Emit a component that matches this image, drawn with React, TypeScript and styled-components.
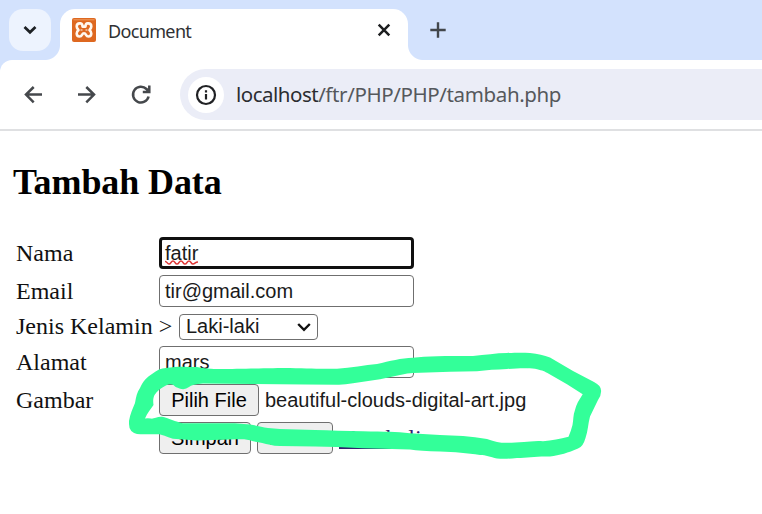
import React from 'react';
import styled, { createGlobalStyle, css } from 'styled-components';

const GlobalStyle = createGlobalStyle`
  * { box-sizing: border-box; }
  body { margin: 0; background: #fff; overflow: hidden; }
`;

const Screen = styled.div`
  position: relative;
  width: 762px;
  height: 514px;
  overflow: hidden;
  background: #fff;
`;

const TabStrip = styled.header`
  display: flex;
  align-items: flex-start;
  height: 60px;
  padding: 9px 0 0 9px;
  background: #d3e2fd;
`;

const TabSearch = styled.button`
  display: grid;
  place-items: center;
  width: 42px;
  height: 42px;
  padding: 0;
  border: 0;
  border-radius: 14px;
  background: #edf3fe;
`;

const Tab = styled.div`
  position: relative;
  display: flex;
  align-items: center;
  width: 348px;
  height: 51px;
  margin-left: 9px;
  padding: 0 15px 9px 12px;
  border-radius: 15px 15px 0 0;
  background: #fff;
  &::before, &::after {
    content: '';
    position: absolute;
    bottom: 0;
    width: 15px;
    height: 15px;
  }
  &::before { left: -15px; background: radial-gradient(circle at 0 0, transparent 14.5px, #fff 15.5px); }
  &::after { right: -15px; background: radial-gradient(circle at 100% 0, transparent 14.5px, #fff 15.5px); }
`;

const TabTitle = styled.span`
  flex: 1;
  margin: 2px 0 0 12px;
  font: 18px/24px "Noto Sans", sans-serif;
  letter-spacing: -0.65px;
  color: #303134;
`;

const TabIcon = styled.svg`
  display: block;
  overflow: visible;
`;

const NewTab = styled.button`
  display: grid;
  place-items: center;
  width: 30px;
  height: 42px;
  margin-left: 15px;
  padding: 0;
  border: 0;
  background: none;
`;

const ToolbarBack = styled.div`
  background: #d3e2fd;
`;

const Toolbar = styled.nav`
  display: flex;
  align-items: center;
  height: 71px;
  padding-left: 18px;
  border-bottom: 2px solid #dfe0e2;
  border-radius: 12px 0 0 0;
  background: #fff;
`;

const NavButton = styled.button`
  display: grid;
  place-items: center;
  width: 30px;
  height: 30px;
  margin-right: 24px;
  padding: 0;
  border: 0;
  background: none;
`;

const AddressBar = styled.div`
  display: flex;
  flex: 1;
  align-items: center;
  height: 51px;
  padding-left: 8px;
  border-radius: 26px 0 0 26px;
  background: #ebedf7;
`;

const SiteInfo = styled.span`
  display: grid;
  place-items: center;
  width: 36px;
  height: 36px;
  border-radius: 50%;
  background: #fff;
`;

const Url = styled.span`
  margin: -2px 0 0 12px;
  font: 20.5px/28px "Noto Sans", sans-serif;
  letter-spacing: -0.38px;
  color: #55585c;
  white-space: nowrap;
  b { font-weight: 400; letter-spacing: -0.5px; color: #2b2d31; }
`;

const Page = styled.main`
  padding: 30px 0 0 13px;
  font: 24px/27px "Liberation Serif", serif;
  color: #111;
`;

const Heading = styled.h2`
  margin: 0 0 32px;
  font-size: 36px;
  line-height: 42px;
  font-weight: 700;
  letter-spacing: -0.1px;
  color: #000;
`;

const FormRow = styled.div<{ $height: number }>`
  display: flex;
  align-items: center;
  height: ${p => p.$height}px;
  padding-left: 3px;
`;

const Label = styled.label<{ $drop?: number }>`
  width: 143px;
  padding-top: ${p => (p.$drop ?? 0) * 2}px;
  white-space: pre;
`;

const controlText = css`
  font: 20px/23px "Liberation Sans", sans-serif;
  color: #1a1a1a;
`;

const Field = styled.div<{ $focused?: boolean; $drop?: number }>`
  ${controlText}
  display: flex;
  align-items: center;
  width: 255px;
  height: 32px;
  padding: ${p => (p.$drop ?? 0) * 2}px ${p => (p.$focused ? 3 : 5)}px 0;
  border: ${p => (p.$focused ? '3px solid #101010' : '1px solid #6f6f6f')};
  border-radius: 4px;
  background: #fff;
`;

const Misspelled = styled.span`
  position: relative;
  svg { position: absolute; left: 0; bottom: 0; }
`;

const Select = styled.div`
  ${controlText}
  display: flex;
  align-items: center;
  justify-content: space-between;
  width: 139px;
  height: 26px;
  margin-left: 20px;
  padding: 0 6px;
  border: 1px solid #6f6f6f;
  border-radius: 4px;
`;

const Button = styled.button<{ $width: number }>`
  ${controlText}
  width: ${p => p.$width}px;
  height: 32px;
  margin-right: 6px;
  padding: 0;
  border: 1px solid #6f6f6f;
  border-radius: 4px;
  background: #efefef;
  color: #000;
`;

const FileName = styled.span`
  ${controlText}
`;

const BackLink = styled.a`
  color: #31206e;
  text-decoration: underline;
  text-decoration-thickness: 2px;
  text-underline-offset: 1px;
`;

const Marker = styled.svg`
  position: absolute;
  inset: 0;
  pointer-events: none;
`;

const markerOutline =
  'M129 421 C130 414 133 408 135 403 C136 397 137 392 140 388 C143 381 147 377 152 374 C157 370 161 368 166 368 C178 366 187 367 197 367 C208 369 215 369 222 369 C236 369 270 368 290 368 C310 368.5 325 369 337 368.7 C351 368 365 365 377 364 C390 361 401 358 413 357.7 C426 356 445 356 473 356 C485 355 496 353 507 353 C517 352.5 524 352.5 530 353 C538 354 544 355 550 357.5 L573 371 L594 382 Q602 386 601 392 Q601 396 598 400 L590 416.5 C588 424 588 431 585.5 438 Q583 447 578 448.5 C568 453 560 455 550 456.5 C536 456 528 458 517 458 C508 459 502 459 497 458.5 C490 457 486 455 480 455 C467 453 455 452 440 451.5 Q420 451 410 449.5 L383 448.7 L363 448.2 L337 447 L315 446.4 L280 446 Q274 446 270 444.8 C264 443.5 260 442 253 441.3 C247 439 243 439 237 439.3 L197 440.5 L173 438.7 C166 437 162 434 157 434.3 C149 434 143 434.5 137 434 Q129 432 129 424 Z ' +
  'M145 418.5 C147 413 151 409 153.5 405 C153 401 153 398 154.5 395 C157 391 161 388 165 386 C168 384 170 384 172 384.5 C174 385 175 387 177 387.5 Q184 391 189 387 Q192 384 203 383.5 L253 384 L305 384.5 L337 384.7 Q344 385 353 383.3 L380 379.3 L400 375 Q408 373 413 373 L450 371.7 L477 371.3 C487 370 496 369.5 507 369 C519 368 528 368 535 368.7 C541 370 544 371 547 372.7 L567 384.3 L582.7 394.3 C579 400 576 405 575 410 C573 415 573.5 420 572.5 425 Q571 431 568.5 436.7 C560 439 552 440 543 441.3 C535 440.5 529 442 524 442 C515 442.5 508 443 501.5 442.7 C495 442 491 440 487 439 C471 436 455 435.5 440 435 L410 433.3 C396 431.5 385 432 363 431.3 C345 431 330 430.5 315 430 L280 429 L268 428 C262 427 257 425.5 250 424.5 L235 423.3 L183 423.3 C176 422 168 418 162 416.8 C157 416.5 154 419 151 418.6 Q148 418 145 418.5 Z';

export default function App() {
  return (
    <Screen>
      <GlobalStyle />
      <TabStrip>
        <TabSearch aria-label="Search tabs">
          <TabIcon width="14" height="10" viewBox="0 0 14 10"><path d="M1.5 2l5.5 5.300L12.500 2" fill="none" stroke="#1d2024" strokeWidth="2.700" /></TabIcon>
        </TabSearch>
        <Tab>
          <TabIcon width="24" height="24" viewBox="0 0 24 24">
            <rect width="24" height="24" rx="2" fill="#de6820" />
            <path d="M1.500 1.800h21" stroke="#ee9a5e" />
            <path d="M8.500 5.400H7.600A3 3 0 0 0 4.700 8.400C4.700 10 5.700 11 6.500 12c-.9.900-1.800 1.900-1.800 3.500a3 3 0 0 0 2.900 3c2.900 0 1.900-3.200 4.400-3.200s1.500 3.200 4.400 3.200a3 3 0 0 0 2.900-3c0-1.600-.9-2.600-1.800-3.500.8-1 1.800-2 1.800-3.600a3 3 0 0 0-2.900-3h-.9c-1.600 0-2 1.200-2 3.200h-3c0-2-.4-3.200-2-3.200z" fill="none" stroke="#fff7ee" strokeWidth="2.600" strokeLinejoin="round" />
            <path d="M8.500 12h7" stroke="#fff7ee" strokeWidth="1.200" strokeDasharray="2 3" />
          </TabIcon>
          <TabTitle>Document</TabTitle>
          <TabIcon width="18" height="18" viewBox="0 0 18 18"><path d="M3.700 3.700l10.600 10.600M14.300 3.700L3.700 14.300" stroke="#1d1e20" strokeWidth="2.500" /></TabIcon>
        </Tab>
        <NewTab aria-label="New tab">
          <TabIcon width="16" height="16" viewBox="0 0 16 16"><path d="M8 .3v15.400M.3 8h15.400" stroke="#42464b" strokeWidth="2.400" /></TabIcon>
        </NewTab>
      </TabStrip>
      <ToolbarBack>
        <Toolbar>
          <NavButton aria-label="Back">
            <TabIcon width="18" height="18" viewBox="0 0 18 18"><path d="M18 8.600H2M9.700 1L2 8.600l7.700 7.700" fill="none" stroke="#45484c" strokeWidth="2.500" /></TabIcon>
          </NavButton>
          <NavButton aria-label="Forward">
            <TabIcon width="18" height="18" viewBox="0 0 18 18"><path d="M0 8.600h16M8.300 1L16 8.600l-7.700 7.700" fill="none" stroke="#45484c" strokeWidth="2.500" /></TabIcon>
          </NavButton>
          <NavButton aria-label="Reload">
            <TabIcon width="20" height="20" viewBox="0 0 20 20"><path d="M17.600 11.500A7.900 7.900 0 1 1 15.500 4L18 6.500M18.300.6v6.500h-6.500" fill="none" stroke="#45484c" strokeWidth="2.500" /></TabIcon>
          </NavButton>
          <AddressBar>
            <SiteInfo>
              <TabIcon width="22" height="22" viewBox="0 0 22 22"><circle cx="11" cy="11" r="9" fill="none" stroke="#202124" strokeWidth="2.200" /><path d="M11 10v5.500M11 6.300v2.200" stroke="#202124" strokeWidth="2.200" /></TabIcon>
            </SiteInfo>
            <Url><b>localhost</b>/ftr/PHP/PHP/tambah.php</Url>
          </AddressBar>
        </Toolbar>
      </ToolbarBack>
      <Page>
        <Heading>Tambah Data</Heading>
        <FormRow $height={36}>
          <Label>Nama</Label>
          <Field $focused>
            <Misspelled>
              fatir
              <svg width="34" height="5" viewBox="0 0 34 5"><path d="M0 1.500C2 1 2 4 4 4s2-3 4-3 2 3 4 3 2-3 4-3 2 3 4 3 2-3 4-3 2 3 4 3 2-2 5-2" fill="none" stroke="#df3838" strokeWidth="1.500" /></svg>
            </Misspelled>
          </Field>
        </FormRow>
        <FormRow $height={39}><Label $drop={1}>Email</Label><Field $drop={1}>tir@gmail.com</Field></FormRow>
        <FormRow $height={33}><Label>Jenis Kelamin &gt;</Label>
          <Select>Laki-laki
            <TabIcon width="14" height="10" viewBox="0 0 14 10"><path d="M1.200 2L7 7.800 12.800 2" fill="none" stroke="#111" strokeWidth="2.400" /></TabIcon>
          </Select>
        </FormRow>
        <FormRow $height={38}><Label>Alamat</Label><Field>mars</Field></FormRow>
        <FormRow $height={38}>
          <Label>Gambar</Label><Button $width={100}>Pilih File</Button><FileName>beautiful-clouds-digital-art.jpg</FileName>
        </FormRow>
        <FormRow $height={38}>
          <Label /><Button $width={92}>Simpan</Button><Button $width={76}>Reset</Button><BackLink>Kembali</BackLink>
        </FormRow>
      </Page>
      <Marker width="762" height="514" viewBox="0 0 762 514"><path d={markerOutline} fill="#33ff99" fillRule="evenodd" /></Marker>
    </Screen>
  );
}
